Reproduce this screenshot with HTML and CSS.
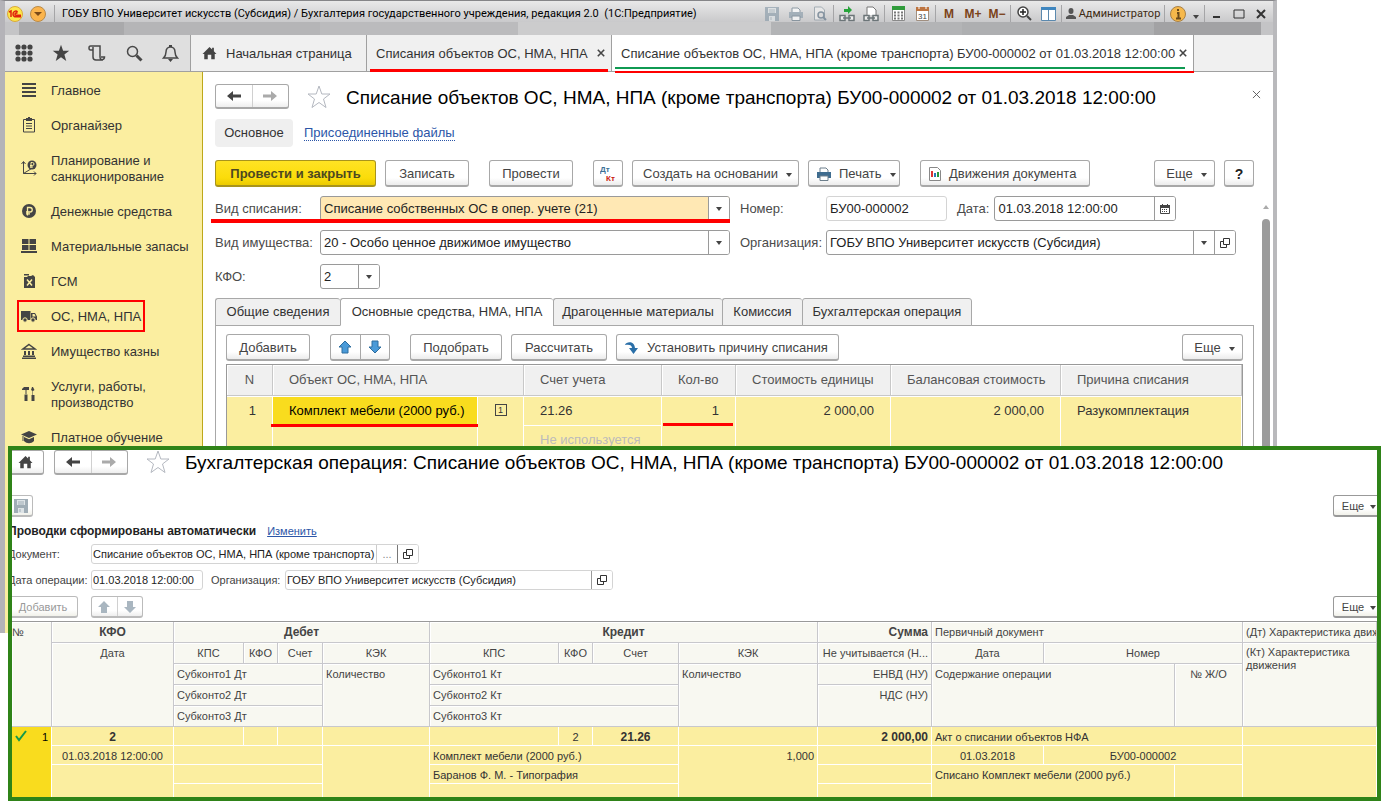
FILE: index.html
```html
<!DOCTYPE html>
<html lang="ru">
<head>
<meta charset="utf-8">
<title>Списание объектов ОС, НМА, НПА</title>
<link rel="stylesheet" href="styles.css">
</head>
<body>
<svg class="sprite" aria-hidden="true">
  <symbol id="home" viewBox="0 0 16 16"><path d="M8 1 0 9h2v6h4v-5h4v5h4V9h2l-3-3V2h-2v2z"/></symbol>
  <symbol id="left" viewBox="0 0 14 10"><path d="M0 5 6 0v3.500h8v3H6V10z"/></symbol>
  <symbol id="right" viewBox="0 0 14 10"><path d="M14 5 8 0v3.500H0v3h8V10z"/></symbol>
  <symbol id="star" viewBox="0 0 24 24"><path d="m12 1 2.800 8H23l-6.500 5 2.500 8.500-7-5-7 5L7.500 14 1 9h8.200z"/></symbol>
  <symbol id="up" viewBox="0 0 14 14"><path d="m7 1 6 6h-3v6H4V7H1z"/></symbol>
  <symbol id="down" viewBox="0 0 14 14"><path d="m7 13 6-6h-3V1H4v6H1z"/></symbol>
  <symbol id="caret" viewBox="0 0 6 4"><path d="M0 0h6L3 4z"/></symbol>
  <symbol id="open" viewBox="0 0 10 10"><path d="M3.500.5h6v6h-6zM3.500 3.500h-3v6h6v-3" fill="none" stroke="#333"/></symbol>
  <symbol id="floppy" viewBox="0 0 14 14"><path d="M0 0h14v14H0z"/><path d="M3 1h8v5H3zM4 9h6v5H4z" fill="#dde3e6"/><path d="M4 3h6M4 5h6M6 10v3" stroke="#a0adb6"/></symbol>
  <symbol id="printer" viewBox="0 0 14 14"><path d="M3 6V1h6l2 2v3" fill="#fff" stroke="#6d7f8c"/><path d="M0 5h14v6H0z"/><path d="M3 9h8v4.500H3z" fill="#fff" stroke="#6d7f8c"/></symbol>
  <symbol id="links" viewBox="0 0 16 8"><path d="M1 1.500h5v5H1zM10 1.500h5v5h-5zM4 4h8" fill="#eee" stroke="#6c7578" stroke-width="1.500"/></symbol>
  <symbol id="cross" viewBox="0 0 10 10"><path d="m1 1 8 8M9 1 1 9" fill="none"/></symbol>
</svg>

<main class="window">
  <header class="titlebar">
    <svg class="logo" viewBox="0 0 16 16"><circle cx="8" cy="8" r="7.500" fill="#fce64a" stroke="#d9a93c"/><path d="m2 6 2-1v6M10.500 6.200C9 4 6 5.500 6 8s2 3 3 2.800h5M10.500 7.400C9.500 6.500 8 7 8 8.200c0 1 .8 1.100 1.500 1.100H14" fill="none" stroke="#e0200c" stroke-width="1.500"/></svg>
    <svg class="logo" viewBox="0 0 16 16"><circle cx="8" cy="8" r="7.500" fill="#fbb44c" stroke="#b98a48"/><path d="M4 6h8l-4 4z" fill="#7b4a18"/></svg>
    <i class="sep"></i>
    <span class="caption">ГОБУ ВПО Университет искусств (Субсидия) / Бухгалтерия государственного учреждения, редакция 2.0&nbsp; (1С:Предприятие)</span>
    <div class="tools">
      <button class="tool dim" aria-label="Сохранить"><svg width="14" height="14"><use href="#floppy"/></svg></button>
      <button class="tool dim" aria-label="Печать"><svg width="14" height="14"><use href="#printer"/></svg></button>
      <button class="tool dim" aria-label="Просмотр"><svg width="14" height="15" viewBox="0 0 14 15"><path d="M1.500 1h7l3 3v10h-10z" fill="#eee" stroke="#8b99a3"/><circle cx="8" cy="9" r="3" fill="#ddd" stroke="#64788a" stroke-width="1.500"/><path d="m10 11 3 3" stroke="#64788a" stroke-width="2"/></svg></button>
      <i class="sep"></i>
      <button class="tool" aria-label="Получить ссылку"><svg width="16" height="16" viewBox="0 0 16 16"><path d="M5 3h4V0l4 4-4 4V6H5z" fill="#27a33a"/><use href="#links" y="8" width="16" height="8"/></svg></button>
      <button class="tool" aria-label="Перейти по ссылке"><svg width="16" height="16" viewBox="0 0 16 16"><path d="M4 9V1h6l3 3v5" fill="#fff" stroke="#777"/><use href="#links" y="8" width="16" height="8"/></svg></button>
      <i class="sep"></i>
      <button class="tool" aria-label="Калькулятор"><svg width="13" height="15" viewBox="0 0 13 15"><path d="M.5.500h12v14H.5z" fill="#fff" stroke="#8a8a8a"/><path d="M0 0h13v4H0z" fill="#319c3c"/><path d="M2 6.500h9M2 9.500h9M2 12.500h9" stroke="#777" stroke-width="2" stroke-dasharray="2 1.500"/></svg></button>
      <button class="tool" aria-label="Календарь"><svg width="13" height="15" viewBox="0 0 13 15"><path d="M.5 2.500h12v12H.5z" fill="#fff" stroke="#a08f80"/><path d="M0 1h13v4H0z" fill="#bd7440"/><path d="M3 0v3M10 0v3" stroke="#fff"/><text x="2" y="13" font-size="8" font-family="Liberation Sans">31</text></svg></button>
      <i class="sep"></i>
      <button class="tool mem">M</button><button class="tool mem">M+</button><button class="tool mem">M−</button>
      <i class="sep"></i>
      <button class="tool" aria-label="Масштаб"><svg width="15" height="15" viewBox="0 0 15 15"><circle cx="6" cy="6" r="5" fill="#fff" stroke="#444" stroke-width="1.500"/><path d="M3 6h6M6 3v6" stroke="#222" stroke-width="1.500"/><path d="m10 10 4 4" stroke="#444" stroke-width="2"/></svg></button>
      <button class="tool" aria-label="Панели"><svg width="15" height="14" viewBox="0 0 15 14"><path d="M.5.500h14v13H.5z" fill="#fff" stroke="#5b89ae"/><path d="M0 0h15v3H0z" fill="#3f86bf"/><path d="M7.500 3v10" stroke="#5b89ae"/></svg></button>
      <i class="sep"></i>
      <button class="tool user"><svg width="10" height="11" viewBox="0 0 10 11"><ellipse cx="5" cy="3" rx="2.500" ry="3" fill="#555"/><path d="M0 11V9l3-2h4l3 2v2z" fill="#555"/></svg>Администратор</button>
      <i class="sep"></i>
      <button class="tool" aria-label="Сведения"><svg width="16" height="16" viewBox="0 0 16 16"><circle cx="8" cy="8" r="7.500" fill="#f6b84b" stroke="#a88147"/><path d="M8 3v2M7 7h1.500v5M6 12.500h5" stroke="#6b4a1b" stroke-width="2" fill="none"/></svg></button>
      <svg class="drop" width="8" height="4"><use href="#caret" width="8" height="4"/></svg>
      <i class="sep"></i>
      <button class="tool sys" aria-label="Свернуть"><svg width="12" height="10"><path d="M2 8h7" stroke="#333" stroke-width="2"/></svg></button>
      <button class="tool sys" aria-label="Развернуть"><svg width="12" height="10"><path d="M1 1h10v8H1z" fill="none" stroke="#333"/></svg></button>
      <button class="tool sys" aria-label="Закрыть"><svg width="10" height="10" stroke="#333" stroke-width="2"><use href="#cross"/></svg></button>
    </div>
  </header>

  <nav class="tabbar">
    <div class="quick">
      <button aria-label="Меню"><svg width="18" height="18" viewBox="0 0 18 18"><g id="dots"><circle cx="3" cy="3" r="2.600"/><circle cx="9" cy="3" r="2.600"/><circle cx="15" cy="3" r="2.600"/></g><use href="#dots" y="6"/><use href="#dots" y="12"/></svg></button>
      <button aria-label="Избранное"><svg width="18" height="18"><use href="#star"/></svg></button>
      <button aria-label="История"><svg width="18" height="18" viewBox="0 0 18 18" fill="none" stroke="#484848" stroke-width="1.500"><path d="M5 6H2.500C.5 6 .5 2 2.500 2H12v11c0 4 4.500 3 4.500 0H13M5 3v10c0 2 1 3 3 3h7"/></svg></button>
      <button aria-label="Поиск"><svg width="17" height="17" viewBox="0 0 17 17"><circle cx="6.500" cy="6.500" r="5" fill="none" stroke="#484848" stroke-width="1.500"/><path d="m10.500 10.500 5 5" stroke="#484848" stroke-width="3"/></svg></button>
      <button aria-label="Уведомления"><svg width="17" height="18" viewBox="0 0 17 18"><path d="M1.500 14c2-2 2.500-3 2.500-6 0-3 2-5 4.500-5S13 5 13 8c0 3 .5 4 2.500 6z" fill="none" stroke="#484848" stroke-width="1.500"/><path d="M7 1h3v2H7zM6 15h5l-2.500 3z"/></svg></button>
    </div>
    <a class="tab start" href="#"><svg width="15" height="14"><use href="#home"/></svg><span>Начальная страница</span></a>
    <a class="tab list marked" href="#"><span>Списания объектов ОС, НМА, НПА</span><svg class="x" width="8" height="8"><use href="#cross"/></svg></a>
    <a class="tab doc marked" href="#"><span>Списание объектов ОС, НМА, НПА (кроме транспорта) БУ00-000002 от 01.03.2018 12:00:00</span><svg class="x" width="8" height="8"><use href="#cross"/></svg></a>
  </nav>

  <div class="body">
    <nav class="sidebar">
      <a href="#"><svg viewBox="0 0 16 16"><path d="M1 2h14M1 6h14M1 10h14M1 14h14" stroke="#444" stroke-width="2"/></svg><span>Главное</span></a>
      <a href="#"><svg viewBox="0 0 16 16"><path d="M2.500 2.500h11v12.500h-11zM5 6.500h6M5 9h6M5 11.500h6" fill="none" stroke="#444"/><path d="M5 1h2V0h2v1h2v3H5z"/></svg><span>Органайзер</span></a>
      <a href="#"><svg viewBox="0 0 16 16"><path d="M2.500 2v11.500H15M2.500 13.500 13 7M.500 4l2-2.500 2 2.500M13 11.500l2 2-2 2" fill="none" stroke="#444"/><circle cx="11" cy="5" r="4.500"/><path d="M10 8V2.500h1.500a1.500 1.500 0 0 1 0 3H9M9 7h3" fill="none" stroke="#fbeea0"/></svg><span>Планирование и санкционирование</span></a>
      <a href="#"><svg viewBox="0 0 16 16"><circle cx="8" cy="8" r="7"/><path d="M6.500 12.500v-8h2.500a2.200 2.200 0 0 1 0 4.500H5M5 10.800h4" fill="none" stroke="#fbeea0" stroke-width="1.300"/></svg><span>Денежные средства</span></a>
      <a href="#"><svg viewBox="0 0 16 16"><path d="M1 1h6.500v5H1zM8.500 1H15v5H8.500zM1 7h6.500v5H1zM8.500 7H15v5H8.500zM0 13h16v2H0z"/></svg><span>Материальные запасы</span></a>
      <a href="#"><svg viewBox="0 0 16 16"><path d="M3 4h3l1-1h3l2-1 2 2v11H3zM3 1h5v1.500H3z"/><path d="m6 6.500 5 6M11 6.500l-5 6" stroke="#fbeea0" stroke-width="1.500"/></svg><span>ГСМ</span></a>
      <a href="#" class="boxed"><svg viewBox="0 0 16 16"><path d="M0 3h9.500v9H0zM10 5h4l2 3.500V12h-6z"/><path d="M11.500 6h2l1.200 2.500h-3.200z" fill="#fbeea0"/><g stroke="#fbeea0"><circle cx="4" cy="12" r="2.200"/><circle cx="12" cy="12" r="2.200"/></g></svg><span>ОС, НМА, НПА</span></a>
      <a href="#"><svg viewBox="0 0 16 16"><path d="m8 1.500 6 4.500H2z" fill="none" stroke="#444" stroke-width="1.500"/><path d="M3 8h2v4H3zM7 8h2v4H7zM11 8h2v4h-2zM2 12.500h12V14H2zM1 14.500h14V16H1z"/></svg><span>Имущество казны</span></a>
      <a href="#"><svg viewBox="0 0 16 16"><path d="M1 3 3 1h5v3H5.500v4h-1V4H1zM3.500 8.500h3V15h-3zM11 1h1l1.500 3L12 5v4h1.500v6h-3V9h1V5L10 4z"/></svg><span>Услуги, работы, производство</span></a>
      <a href="#"><svg viewBox="0 0 16 16"><path d="M8 2 0 5.500 8 9l8-3.500zM3 8v4c3 3 7 3 10 0V8L8 10.300zM1.500 7h1v5h-1z"/></svg><span>Платное обучение</span></a>
    </nav>

    <section class="form">
      <div class="heading">
        <div class="pair"><button aria-label="Назад"><svg width="14" height="10"><use href="#left"/></svg></button><button aria-label="Вперед" class="off"><svg width="14" height="10"><use href="#right"/></svg></button></div>
        <svg class="fav" width="24" height="24"><use href="#star"/></svg>
        <h1>Списание объектов ОС, НМА, НПА (кроме транспорта) БУ00-000002 от 01.03.2018 12:00:00</h1>
        <button class="bare" aria-label="Закрыть"><svg width="9" height="9" stroke="#555" stroke-width="1"><use href="#cross"/></svg></button>
      </div>
      <div class="views"><a class="current" href="#">Основное</a><a class="link" href="#">Присоединенные файлы</a></div>
      <div class="commands">
        <button class="btn primary">Провести и закрыть</button>
        <button class="btn w84">Записать</button>
        <button class="btn w84 apart">Провести</button>
        <button class="btn w30 apart" aria-label="Проводки"><svg width="16" height="18" viewBox="0 0 16 18" font-family="Liberation Sans" font-weight="700" font-size="8"><text x="0" y="7" fill="#3b7096">Дт</text><text x="6" y="16" fill="#c8200c">Кт</text></svg></button>
        <button class="btn w167">Создать на основании<svg class="arr" width="6" height="4"><use href="#caret"/></svg></button>
        <button class="btn w92 iconed"><svg width="14" height="14" fill="#3f6c8f"><use href="#printer"/></svg>Печать<svg class="arr" width="6" height="4"><use href="#caret"/></svg></button>
        <button class="btn w170 iconed apart"><svg width="12" height="14" viewBox="0 0 12 14"><path d="M.5.500h8l3 3v10H.5z" fill="#fff" stroke="#888"/><path d="M3 4v6" stroke="#d33" stroke-width="2"/><path d="M6 6v4" stroke="#2a78b8" stroke-width="2"/><path d="M9 5v5" stroke="#279a3a" stroke-width="2"/></svg>Движения документа</button>
        <button class="btn w61 push">Еще<svg class="arr" width="6" height="4"><use href="#caret"/></svg></button>
        <button class="btn w30 help">?</button>
      </div>

      <div class="fields">
        <label for="kind">Вид списания:</label>
        <div class="field hot"><select id="kind"><option>Списание собственных ОС в опер. учете (21)</option></select><span class="cell"><svg width="6" height="4"><use href="#caret"/></svg></span></div>
        <label for="num" class="second">Номер:</label>
        <div class="split">
          <div class="field soft"><input id="num" value="БУ00-000002"></div>
          <label for="date">Дата:</label>
          <div class="field date"><input id="date" value="01.03.2018 12:00:00"><button class="cell" aria-label="Календарь"><svg width="10" height="10" viewBox="0 0 10 10"><path d="M.5 1.500h9v8h-9z" fill="none" stroke="#444"/><path d="M0 1h10v3H0zM2 0h1v2H2zM7 0h1v2H7z"/><path d="M2 5.500h6M2 7.500h6" stroke="#444" stroke-dasharray="1 1"/></svg></button></div>
        </div>
        <label for="prop">Вид имущества:</label>
        <div class="field"><select id="prop"><option>20 - Особо ценное движимое имущество</option></select><span class="cell"><svg width="6" height="4"><use href="#caret"/></svg></span></div>
        <label for="org" class="second">Организация:</label>
        <div class="field"><select id="org"><option>ГОБУ ВПО Университет искусств (Субсидия)</option></select><span class="cell"><svg width="6" height="4"><use href="#caret"/></svg></span><button class="cell" aria-label="Открыть"><svg width="10" height="10"><use href="#open"/></svg></button></div>
        <label for="kfo">КФО:</label>
        <div class="field tiny"><select id="kfo"><option>2</option></select><span class="cell"><svg width="6" height="4"><use href="#caret"/></svg></span></div>
      </div>

      <div class="pages">
        <button class="p125">Общие сведения</button><button class="p213 on">Основные средства, НМА, НПА</button><button class="p169">Драгоценные материалы</button><button class="p80">Комиссия</button><button class="p169">Бухгалтерская операция</button>
      </div>
      <div class="page">
        <div class="commands">
          <button class="btn w84">Добавить</button>
          <div class="pair blue apart"><button aria-label="Вверх"><svg width="14" height="14"><use href="#up"/></svg></button><button aria-label="Вниз"><svg width="14" height="14"><use href="#down"/></svg></button></div>
          <button class="btn w92 apart">Подобрать</button>
          <button class="btn w96">Рассчитать</button>
          <button class="btn w223 iconed"><svg width="14" height="12" viewBox="0 0 14 12" fill="#2a6fa8"><path d="M0 3c1-3 9-5 10 3h3l-4.500 6L4 6h3c0-3-3-4-7-3z"/></svg>Установить причину списания</button>
          <button class="btn w61 push">Еще<svg class="arr" width="6" height="4"><use href="#caret"/></svg></button>
        </div>
        <table class="items">
          <colgroup><col class="c46"><col class="c205"><col class="c46"><col class="c138"><col class="c74"><col class="c155"><col class="c170"><col></colgroup>
          <thead><tr><th class="mid">N</th><th colspan="2">Объект ОС, НМА, НПА</th><th>Счет учета</th><th>Кол-во</th><th>Стоимость единицы</th><th>Балансовая стоимость</th><th>Причина списания</th></tr></thead>
          <tbody>
            <tr><td class="num" rowspan="2">1</td><td class="sel">Комплект мебели (2000 руб.)</td><td class="flag"><span>1</span></td><td>21.26</td><td class="num qty" rowspan="2">1</td><td class="num" rowspan="2">2 000,00</td><td class="num" rowspan="2">2 000,00</td><td rowspan="2">Разукомплектация</td></tr>
            <tr><td></td><td></td><td class="hint">Не используется</td></tr>
          </tbody>
        </table>
      </div>
      <div class="scroll"><svg width="6" height="4" viewBox="0 0 6 4"><path d="M3 0 6 4H0z" fill="#aaa"/></svg><i></i></div>
    </section>
  </div>
</main>

<section class="overlay">
  <div class="inner">
    <div class="heading">
      <div class="pair one"><button aria-label="Домой"><svg width="15" height="14"><use href="#home"/></svg></button></div>
      <div class="pair"><button aria-label="Назад"><svg width="14" height="10"><use href="#left"/></svg></button><button aria-label="Вперед" class="off"><svg width="14" height="10"><use href="#right"/></svg></button></div>
      <svg class="fav" width="24" height="24"><use href="#star"/></svg>
      <h2>Бухгалтерская операция: Списание объектов ОС, НМА, НПА (кроме транспорта) БУ00-000002 от 01.03.2018 12:00:00</h2>
    </div>
    <div class="line"><button class="btn small w26" aria-label="Записать"><svg width="14" height="14" fill="#a0adb6"><use href="#floppy"/></svg></button><button class="btn small w52 push">Еще<svg class="arr" width="6" height="4"><use href="#caret"/></svg></button></div>
    <p class="note"><b>Проводки сформированы автоматически</b><a class="solid" href="#">Изменить</a></p>
    <div class="line fieldline"><label for="doc">Документ:</label><div class="field soft doc"><input id="doc" value="Списание объектов ОС, НМА, НПА (кроме транспорта)"><button class="cell">...</button><button class="cell" aria-label="Открыть"><svg width="10" height="10"><use href="#open"/></svg></button></div></div>
    <div class="line fieldline"><label for="odate">Дата операции:</label><div class="field soft odate"><input id="odate" value="01.03.2018 12:00:00"></div><label for="oorg" class="org">Организация:</label><div class="field soft oorg"><input id="oorg" value="ГОБУ ВПО Университет искусств (Субсидия)"><button class="cell" aria-label="Открыть"><svg width="10" height="10"><use href="#open"/></svg></button></div></div>
    <div class="line last"><button class="btn small w70" disabled>Добавить</button><div class="pair dimmed"><button aria-label="Вверх"><svg width="14" height="14"><use href="#up"/></svg></button><button aria-label="Вниз"><svg width="14" height="14"><use href="#down"/></svg></button></div><button class="btn small w52 push">Еще<svg class="arr" width="6" height="4"><use href="#caret"/></svg></button></div>
  </div>
  <table class="ledger">
    <colgroup><col class="l40"><col class="l122"><col class="l70"><col class="l34"><col class="l45"><col class="l107"><col class="l129"><col class="l34"><col class="l86"><col class="l139"><col class="l114"><col class="l112"><col class="l131"><col class="l68"><col></colgroup>
    <thead>
      <tr><th rowspan="5" class="edge">№</th><th class="c b">КФО</th><th colspan="4" class="c b">Дебет</th><th colspan="4" class="c b">Кредит</th><th class="r b">Сумма</th><th colspan="3">Первичный документ</th><th>(Дт) Характеристика движения</th></tr>
      <tr><th rowspan="4" class="c">Дата</th><th class="c">КПС</th><th class="c">КФО</th><th class="c">Счет</th><th class="c">КЭК</th><th class="c">КПС</th><th class="c">КФО</th><th class="c">Счет</th><th class="c">КЭК</th><th class="r">Не учитывается (Н...</th><th class="c">Дата</th><th colspan="2" class="c">Номер</th><th rowspan="4" class="wrap">(Кт) Характеристика<br>движения</th></tr>
      <tr><th colspan="3">Субконто1 Дт</th><th rowspan="3">Количество</th><th colspan="3">Субконто1 Кт</th><th rowspan="3">Количество</th><th class="r">ЕНВД (НУ)</th><th colspan="2" rowspan="3">Содержание операции</th><th rowspan="3" class="c">№ Ж/О</th></tr>
      <tr><th colspan="3">Субконто2 Дт</th><th colspan="3">Субконто2 Кт</th><th rowspan="2" class="r">НДС (НУ)</th></tr>
      <tr><th colspan="3">Субконто3 Дт</th><th colspan="3">Субконто3 Кт</th></tr>
    </thead>
    <tbody>
      <tr><td rowspan="4" class="pick r"><svg width="12" height="12" viewBox="0 0 12 12"><path d="m1 6 3 4 7-9" fill="none" stroke="#149a4a" stroke-width="2"/></svg>1</td><td class="c b">2</td><td></td><td></td><td></td><td></td><td></td><td class="c">2</td><td class="c b">21.26</td><td></td><td class="r b">2 000,00</td><td colspan="3">Акт о списании объектов НФА</td><td></td></tr>
      <tr><td class="c">01.03.2018 12:00:00</td><td colspan="3"></td><td rowspan="3"></td><td colspan="3">Комплект мебели (2000 руб.)</td><td rowspan="3" class="r">1,000</td><td></td><td class="c">01.03.2018</td><td colspan="2" class="c">БУ00-000002</td><td rowspan="3"></td></tr>
      <tr><td rowspan="2"></td><td colspan="3"></td><td colspan="3">Баранов Ф. М. - Типография</td><td></td><td colspan="2" rowspan="2">Списано Комплект мебели (2000 руб.)</td><td rowspan="2"></td></tr>
      <tr><td colspan="3"></td><td colspan="3"></td><td></td></tr>
    </tbody>
  </table>
</section>
</body>
</html>
```

FILE: styles.css
```css
*, *::before, *::after { box-sizing: border-box; }
body { margin: 0; position: relative; min-height: 801px; overflow: hidden; background: #fff; color: #333; fill: #444; font: 13px/16px "Liberation Sans", Arial, sans-serif; }
.sprite { display: none; }
button, input, select { font: inherit; color: inherit; }
button { padding: 0; border: 0; background: none; }
svg { flex: none; }
a { color: inherit; text-decoration: none; }
h1, h2, p { margin: 0; }

/* application window */
.window { margin-right: 104px; height: 633px; border: solid #b9b9bc; border-width: 1px 4px 0 5px; border-top-color: #858588; border-left-color: #b4b3b8; display: flex; flex-direction: column; }
.titlebar { height: 34px; padding: 0 1px 9px 2px; display: flex; align-items: center; background: linear-gradient(90deg, #c4c4c6 14px, #a9a9ab 14px 119px, #b5b5b7 119px 315px, #bbbbbd 315px 513px, #cccccd 513px 766px, #b3b4b6 766px 957px, #aeafb1 957px 1149px, #a2a2a4 1149px 1256px, #c4c4c6 1256px) 0 21px / 100% 13px no-repeat, linear-gradient(#e9e9e9, #c9c9cb 21px); color: #111; font-size: 12px; }
.logo { width: 16px; height: 16px; margin-right: 7px; }
.sep { width: 1px; height: 17px; margin: 0 1px; background: #a5a5a7; }
.caption { margin-left: 6px; flex: 1; white-space: nowrap; font: 11px/16px Roboto, sans-serif; color: #000; }
.tools { display: flex; align-items: center; }
.tool { width: 24px; height: 18px; display: flex; align-items: center; justify-content: center; }
.tool.dim { opacity: .7; fill: #8fa0ad; }
.tool.mem { color: #7b4218; font-weight: bold; font-size: 12px; }
.tool.user { width: 100px; gap: 3px; font: 11px/16px Roboto, sans-serif; color: #3d2a12; }
.tool.sys { width: 22px; }
.drop { margin: 6px 3px 0 2px; }

.tabbar { height: 37px; display: flex; background: #f0f0f0; border-bottom: 1px solid #a0a0a0; }
.quick { width: 186px; padding: 0 1px; background: #dfdfdf; border-right: 1px solid #a0a0a0; display: flex; }
.quick button { flex: 1; display: flex; align-items: center; justify-content: center; }
.tab { position: relative; display: flex; align-items: center; border-right: 1px solid #a0a0a0; white-space: nowrap; padding: 0 9px; }
.tab span { padding-top: 2px; }
.tab.start { width: 176px; gap: 9px; padding-left: 11px; }
.tab.list { width: 245px; }
.tab.doc { width: 582px; background: #fff; }
.x { margin-left: auto; stroke: #444; stroke-width: 2; }
.tab.list .x, .tab.doc .x { margin-right: -3px; }
.marked::after { content: ""; position: absolute; left: 3px; right: 3px; bottom: -1px; height: 3px; background: #f00; }
.tab.doc::after { right: -1px; bottom: -2px; height: 2px; }
.tab.doc::before { content: ""; position: absolute; left: 3px; right: 8px; bottom: 2px; height: 2px; background: #0f9a52; }

.body { flex: 1; min-height: 0; display: flex; }
.sidebar { width: 198px; flex: none; background: #fbeea0; border-right: 1px solid #bda81a; padding: 10px 0 0 16px; display: flex; flex-direction: column; gap: 19px; }
.sidebar a { position: relative; display: flex; align-items: center; gap: 14px; padding-right: 12px; }
.sidebar svg { width: 16px; height: 16px; }
.sidebar span { padding-top: 1px; margin-bottom: -1px; }
.boxed::after { content: ""; position: absolute; left: -4px; top: -8px; width: 128px; height: 32px; border: 2px solid #f00; }

/* document form */
.form { position: relative; flex: 1; min-width: 0; padding: 12px 19px 0 12px; }
.heading { display: flex; align-items: center; height: 25px; }
.pair { display: flex; width: 74px; height: 25px; border: 1px solid #a8a8a8; border-bottom-width: 2px; border-radius: 3px; background: linear-gradient(#fff 70%, #eee); }
.pair button { flex: 1; display: flex; align-items: center; justify-content: center; }
.pair button + button { border-left: 1px solid #d0d0d0; }
.off { fill: #aaa; }
.fav { margin: 0 15px 0 18px; fill: none; stroke: #b4b8c0; stroke-width: 1; }
h1, h2 { flex: 1; padding-top: 2px; font-size: 19px; line-height: 24px; font-weight: normal; color: #000; white-space: nowrap; }
.bare { align-self: flex-start; padding: 3px; margin-right: -10px; }
.views { display: flex; align-items: center; gap: 11px; margin-top: 10px; height: 28px; }
.current { background: #efefef; border-radius: 4px; width: 78px; line-height: 28px; text-align: center; }
.link { color: #2c56a8; border-bottom: 1px dotted #2c56a8; line-height: 15px; }
.commands { display: flex; gap: 9px; margin-top: 13px; }
.btn { height: 27px; flex: none; display: flex; align-items: center; justify-content: center; gap: 8px; padding-top: 1px; border: 1px solid #a8a8a8; border-bottom-width: 2px; border-radius: 3px; background: linear-gradient(#fff 70%, #ececec); color: #444; white-space: nowrap; }
.iconed { justify-content: flex-start; padding-left: 8px; }
.primary { width: 161px; font-weight: bold; color: #4d4820; border-color: #a8941c; background: linear-gradient(#ffe324, #fbdc0a 70%, #eccb00); }
.help { font-weight: bold; font-size: 14px; color: #222; }
.apart { margin-left: 11px; }
.push { margin-left: auto; }
.arr { margin: 2px -4px 0 0; }
.w26 { width: 26px; } .w30 { width: 30px; } .w52 { width: 52px; } .w61 { width: 61px; } .w70 { width: 70px; } .w84 { width: 84px; } .w92 { width: 92px; } .w96 { width: 96px; } .w167 { width: 167px; } .w170 { width: 170px; } .w223 { width: 223px; }

.fields { display: grid; grid-template-columns: 105px 410px 96px 410px; row-gap: 9px; margin-top: 9px; align-items: center; position: relative; color: #4a4a4a; }
.fields::after { content: ""; position: absolute; left: -4px; top: 23px; width: 519px; height: 4px; background: #f00; }
.second { padding-left: 10px; }
.split { display: flex; align-items: center; }
.split .soft { width: 121px; }
.split label { margin: 0 5px 0 10px; }
.split .date { width: 182px; }
.field { display: flex; height: 25px; border: 1px solid #9a9a9a; border-radius: 3px; overflow: hidden; background: #fff; color: #222; }
.field.soft { border-color: #d4d4d4; }
.field.hot { background: #ffe8b4; }
.field.tiny { width: 60px; }
.field input, .field select { flex: 1; width: 0; min-width: 0; border: 0; padding: 0 3px; background: transparent; appearance: none; outline: 0; }
.cell { width: 21px; flex: none; display: flex; align-items: center; justify-content: center; background: #fff; border-left: 1px solid #9a9a9a; }

.pages { display: flex; margin: 9px 0 -1px; position: relative; }
.pages button { height: 28px; border: 1px solid #a8a8a8; border-right: 0; background: #f0f0f0; border-radius: 3px 3px 0 0; white-space: nowrap; }
.pages button:last-child { border-right: 1px solid #a8a8a8; width: 170px; }
.pages .on { background: #fff; border-bottom-color: #fff; }
.p125 { width: 125px; } .p213 { width: 213px; } .p169 { width: 169px; } .p80 { width: 80px; }
.page { border: 1px solid #a8a8a8; padding: 8px 10px 0; height: 320px; }
.page .commands { margin-top: 0; }
.page .pair { width: 60px; height: 27px; }
.page .pair button + button { border-color: #a8a8a8; }
.blue { fill: #4a9ad8; stroke: #2c6c9e; }

table { border-collapse: separate; border-spacing: 0; table-layout: fixed; width: 100%; }
.items { margin-top: 3px; border: 1px solid #999; }
.items th { height: 31px; padding: 0 16px; text-align: left; font-weight: normal; color: #555; background: #f0f0f0; border-right: 1px solid #c8c8c8; border-bottom: 1px solid #c8c8c8; box-shadow: inset 1px 1px #fff; white-space: nowrap; }
.items th.mid { text-align: center; padding: 0; }
.items td { height: 29px; padding: 6px 16px; vertical-align: top; background: #fbeea0; border-right: 1px solid #fff; border-top: 1px solid #fff; white-space: nowrap; }
.items tr + tr td { height: 60px; }
.items .num { text-align: right; }
.items td.sel { position: relative; background: #f9dc1e; color: #000; }
.items .sel::after { content: ""; position: absolute; left: -2px; right: -1px; bottom: -2px; height: 3px; background: #f00; }
.items td.flag { text-align: center; }
.flag span { display: inline-block; width: 12px; height: 12px; border: 1px solid #444; font-size: 9px; line-height: 10px; vertical-align: 2px; }
.qty { position: relative; }
.qty::after { content: ""; position: absolute; left: 1px; right: 2px; top: 26px; height: 3px; background: #f00; }
.items td.hint { color: #bbb; }
.items tr + tr td:not(.hint) { border-top: 0; }
.c46 { width: 46px; } .c205 { width: 205px; } .c138 { width: 138px; } .c74 { width: 74px; } .c155 { width: 155px; } .c170 { width: 170px; }
.scroll { position: absolute; right: 3px; top: 133px; bottom: 0; width: 8px; display: flex; flex-direction: column; align-items: center; gap: 10px; }
.scroll i { flex: 1; width: 8px; border-radius: 4px; background: #9b9b9b; }

/* accounting entry window, laid over the document */
.overlay { position: absolute; left: 8px; right: 0; top: 446px; height: 355px; border: 4px solid #2f8318; background: #fff; overflow: hidden; font-size: 11px; line-height: 14px; color: #444; }
.inner { margin-left: -4px; }
.overlay .heading { height: 24px; }
.overlay .pair { width: 74px; }
.overlay .pair.one { width: 38px; margin: 0 10px 0 -2px; }
.line { display: flex; align-items: center; }
.heading + .line { margin-top: 21px; }
.btn.small { height: 22px; gap: 6px; border-color: #bbb; background: linear-gradient(#fff 65%, #f1f1ea); }
.btn.small.w26 { width: 25px; }
.btn.small.w52 { border-color: #999; margin-right: -8px; }
.small .arr { margin-right: 0; }
.btn:disabled { color: #999; }
.note { display: flex; gap: 11px; margin-top: 6px; line-height: 16px; color: #222; }
.note b { font-size: 12px; }
.solid { color: #2c56a8; text-decoration: underline; }
.fieldline { margin-top: 6px; }
.note + .fieldline { margin-top: 5px; }
.overlay .field { height: 20px; }
.fieldline label { width: 83px; white-space: nowrap; }
.fieldline .org { width: 74px; margin-left: 8px; }
.doc { width: 328px; } .odate { width: 112px; } .oorg { width: 328px; }
.overlay .field input { padding: 0 1px; }
.overlay .cell + .cell { border-left-color: #777; }
.doc .cell:first-of-type { border-left-color: #ccc; color: #888; }
.last { margin-top: 6px; }
.dimmed { margin-left: 13px; fill: #a9b6c0; }
.overlay .dimmed { width: 52px; height: 22px; border-color: #bbb; }
.ledger { margin-top: 3px; border-top: 1px solid #999; }
.ledger th { height: 21px; padding: 3px 3px 0; vertical-align: top; text-align: left; font-weight: normal; background: #f8f8f1; border-right: 1px solid #c8c8cc; border-bottom: 1px solid #c8c8cc; box-shadow: inset 1px 1px #fff; white-space: nowrap; overflow: hidden; }
.ledger td { height: 19px; padding: 3px 3px 0; vertical-align: top; background: #fbeea0; border-right: 1px solid #fff; border-bottom: 1px solid #fff; white-space: nowrap; color: #333; }
.ledger th.edge { padding-left: 0; }
.ledger th.wrap { line-height: 13px; }
.ledger .c { text-align: center; }
.ledger .r { text-align: right; }
.ledger .b { font-weight: bold; font-size: 12px; }
.ledger td.pick { background: #f9dc1e; color: #000; }
.pick svg { float: left; }
.l40 { width: 40px; } .l122 { width: 122px; } .l70 { width: 70px; } .l34 { width: 34px; } .l45 { width: 45px; } .l107 { width: 107px; } .l129 { width: 129px; } .l86 { width: 86px; } .l139 { width: 139px; } .l114 { width: 114px; } .l112 { width: 112px; } .l131 { width: 131px; } .l68 { width: 68px; }
```
